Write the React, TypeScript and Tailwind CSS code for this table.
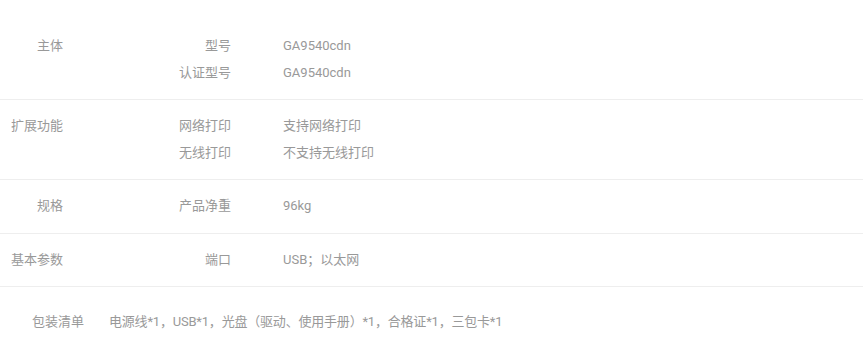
import React from "react";

const groups: { name: string; rows: [string, string][] }[] = [
  { name: "主体", rows: [["型号", "GA9540cdn"], ["认证型号", "GA9540cdn"]] },
  { name: "扩展功能", rows: [["网络打印", "支持网络打印"], ["无线打印", "不支持无线打印"]] },
  { name: "规格", rows: [["产品净重", "96kg"]] },
  { name: "基本参数", rows: [["端口", "USB；以太网"]] },
];

export default function App() {
  return (
    <div
      className="w-[863px] h-[347px] bg-white text-[13px] text-[#999999] overflow-hidden pt-[20px]"
      style={{ fontFamily: 'Roboto, "Noto Sans CJK SC", sans-serif' }}
    >
      {groups.map((g) => (
        <div key={g.name} className="flex border-b border-[#eeeeee] py-[13px] leading-[26.5px]">
          <div className="w-[63px] text-right shrink-0">{g.name}</div>
          <div className="flex flex-col">
            {g.rows.map(([k, v]) => (
              <div key={k} className="flex">
                <div className="w-[168px] text-right shrink-0">{k}</div>
                <div className="pl-[52px]">{v}</div>
              </div>
            ))}
          </div>
        </div>
      ))}
      <div className="flex pt-[22px] leading-[26.5px]">
        <div className="w-[84px] text-right shrink-0">包装清单</div>
        <div className="pl-[25px] tracking-[-0.2px]">电源线*1，USB*1，光盘（驱动、使用手册）*1，合格证*1，三包卡*1</div>
      </div>
    </div>
  );
}
